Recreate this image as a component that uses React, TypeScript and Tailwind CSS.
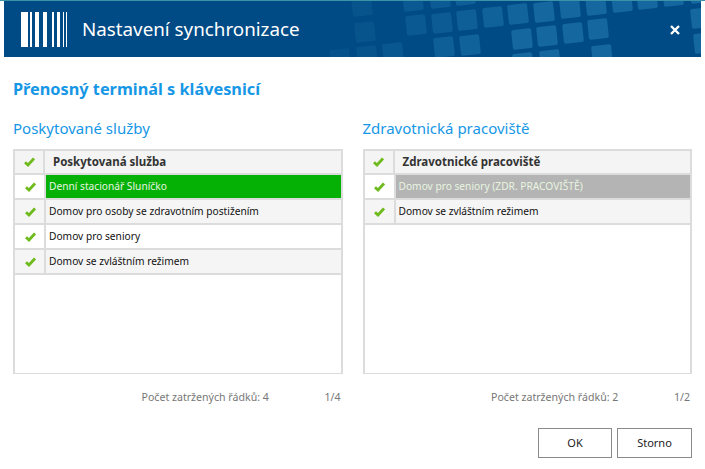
const BODY = "font-['Noto_Sans',sans-serif]"

const SERVICES = ['Denní stacionář Sluníčko', 'Domov pro osoby se zdravotním postižením', 'Domov pro seniory', 'Domov se zvláštním režimem']
const WORKPLACES = ['Domov pro seniory (ZDR. PRACOVIŠTĚ)', 'Domov se zvláštním režimem']

// tiles of the header background: page x, page y, opacity
const TILES = [
  [352, -4, 0.35], [403, -9, 0.5], [430, -12, 0.6], [455, -15, 0.7],
  [355, 22, 0.35], [406, 15, 0.5], [432, 13, 0.6], [457, 10, 0.7],
  [483, 7, 0.8], [508, 4, 0.9], [534, 2, 1], [560, -2, 1], [586, -5, 1], [612, -8, 1], [637, -11, 1], [663, -14, 1], [690, -17, 1],
  [512, 29, 1], [537, 26, 1], [563, 23, 1], [588, 19, 1], [691, 8, 1], [694, 33, 1],
  [330, 49, 0.3], [357, 46, 0.35], [383, 43, 0.45], [434, 37, 0.7], [460, 35, 0.8], [513, 53, 1], [540, 50, 1], [592, 45, 1],
]

function Check() {
  return (
    <svg width="11" height="10" viewBox="0 0 11 10" className="shrink-0">
      <path d="M1 5.2 L4 8 L10 1.4" fill="none" stroke="#6fbb1e" strokeWidth="2.8" />
    </svg>
  )
}

function Barcode() {
  const bars = [[0, 7], [9, 2], [14, 4], [22, 4], [31, 2], [36, 3], [42, 1], [45, 1]]
  return (
    <svg width="46" height="35" viewBox="0 0 46 35" className="shrink-0">
      {bars.map(([x, w]) => (
        <rect key={x} x={x} y="0" width={w} height="35" fill="#fff" />
      ))}
    </svg>
  )
}

function Grid({ title, rows, highlight, column, footer, page }: { title: string; rows: string[]; highlight: string; column: string; footer: string; page: string }) {
  return (
    <div className="flex flex-col w-[330px]">
      <h2 className={`-mt-px text-[15px] leading-[20px] text-[#1697e6] ${BODY}`}>{title}</h2>
      <div className="mt-[11px] h-[225px] border-2 border-[#dcdcdc] border-b bg-white">
        <div className="flex h-[24px] bg-[#f4f4f4] border-b-2 border-[#dcdcdc]">
          <div className="w-[30px] flex items-center justify-center border-r-2 border-[#dcdcdc]"><Check /></div>
          <div className={`pl-[8px] flex items-center text-[11.5px] font-bold text-[#333] ${BODY}`}>{column}</div>
        </div>
        {rows.map((row, i) => (
          <div key={row} className={`flex h-[25px] border-b-2 border-[#dcdcdc] ${i % 2 ? 'bg-[#f5f5f5]' : 'bg-white'}`}>
            <div className="w-[29px] flex items-center justify-center pl-px"><Check /></div>
            <div className={`flex-1 pl-[3px] flex items-center border-l-2 border-[#dcdcdc] text-[10.2px] ${BODY} ${i === 0 ? `${highlight} text-[#e8f4e0]` : 'text-[#111]'}`}>{row}</div>
          </div>
        ))}
      </div>
      <div className={`mt-[16px] flex justify-end text-[10.6px] text-[#777] whitespace-nowrap ${BODY}`}>
        <span className="w-[128px]">{footer}</span>
        <span className="w-[73px] text-right pr-[2px]">{page}</span>
      </div>
    </div>
  )
}

export default function App() {
  return (
    <div className="w-[705px] h-[469px] bg-white overflow-hidden">
      <div className="h-px bg-[#3b93a8]" />
      <header className="relative ml-[4px] w-[697px] h-[56px] bg-[#004a85] overflow-hidden flex items-center pl-[17px]">
        {TILES.map(([x, y, o]) => (
          <div key={`${x}-${y}`} className="absolute w-[20px] h-[20px] rounded-[2px] bg-[#14689f] -rotate-6" style={{ left: x - 4, top: y - 1, opacity: o }} />
        ))}
        <Barcode />
        <h1 className={`relative ml-[15px] text-[18.8px] text-white ${BODY}`}>Nastavení synchronizace</h1>
        <svg width="10" height="10" viewBox="0 0 10 10" className="absolute left-[666px] top-[24px]">
          <path d="M1 1 L9 9 M9 1 L1 9" stroke="#fff" strokeWidth="2.4" />
        </svg>
      </header>
      <div className="px-[13px] pt-[22px]">
        <h3 className={`text-[16.3px] leading-[20px] font-bold text-[#1697e6] ${BODY}`}>Přenosný terminál s klávesnicí</h3>
        <div className="mt-[20px] flex gap-[20px]">
          <Grid title="Poskytované služby" rows={SERVICES} highlight="bg-[#06b106]" column="Poskytovaná služba" footer="Počet zatržených řádků: 4" page="1/4" />
          <Grid title="Zdravotnická pracoviště" rows={WORKPLACES} highlight="bg-[#b4b4b4]" column="Zdravotnické pracoviště" footer="Počet zatržených řádků: 2" page="1/2" />
        </div>
        <div className={`mt-[22px] flex justify-end gap-[5px] text-[11px] text-[#222] ${BODY}`}>
          <button className="w-[74px] h-[30px] border border-[#8a8a8a]">OK</button>
          <button className="w-[75px] h-[30px] border border-[#8a8a8a]">Storno</button>
        </div>
      </div>
    </div>
  )
}
